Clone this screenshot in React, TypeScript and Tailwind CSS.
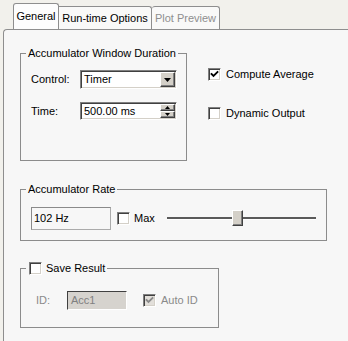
import React from 'react';

const Check = ({ color = '#000' }: { color?: string }) => (
  <svg width="9" height="9" viewBox="0 0 9 9" className="block">
    <polyline points="1.5,4 3.5,6 7.5,2" fill="none" stroke={color} strokeWidth="1.8" strokeLinecap="square" />
  </svg>
);

const CheckBox = ({ checked = false, disabled = false }: { checked?: boolean; disabled?: boolean }) => (
  <div
    className={`w-[13px] h-[13px] shrink-0 flex items-center justify-center border border-t-[#808080] border-l-[#808080] border-b-white border-r-white shadow-[inset_1px_1px_0_#404040,inset_-1px_-1px_0_#d4d0c8] ${
      disabled ? 'bg-[#e2dfda]' : 'bg-white'
    }`}
  >
    {checked && <Check color={disabled ? '#8a8a8a' : '#000'} />}
  </div>
);

const Raised = ({ className = '', children }: { className?: string; children?: React.ReactNode }) => (
  <div
    className={`bg-[#d4d0c8] border border-t-white border-l-white border-b-[#404040] border-r-[#404040] shadow-[inset_-1px_-1px_0_#808080] flex items-center justify-center ${className}`}
  >
    {children}
  </div>
);

const Tri = ({ up = false, size = 'big' }: { up?: boolean; size?: 'big' | 'small' }) => (
  <svg width={size === 'big' ? 7 : 5} height={size === 'big' ? 4 : 3} viewBox={size === 'big' ? '0 0 7 4' : '0 0 5 3'} className="block">
    {size === 'big' ? (
      <polygon points={up ? '3.5,0 7,4 0,4' : '0,0 7,0 3.5,4'} fill="#000" />
    ) : (
      <polygon points={up ? '2.5,0 5,3 0,3' : '0,0 5,0 2.5,3'} fill="#000" />
    )}
  </svg>
);

const Group = ({
  legend,
  className = '',
  children,
}: {
  legend: React.ReactNode;
  className?: string;
  children?: React.ReactNode;
}) => (
  <div className={`relative border border-[#8c8c8c] ${className}`}>
    <div className="absolute top-[-7px] left-[5px] px-[2px] bg-[#f7f7f7] h-[13px] flex items-center leading-[13px]">
      {legend}
    </div>
    {children}
  </div>
);

const Sunken = ({ className = '', children }: { className?: string; children?: React.ReactNode }) => (
  <div
    className={`border border-t-[#808080] border-l-[#808080] border-b-white border-r-white shadow-[inset_1px_1px_0_#404040,inset_-1px_-1px_0_#d4d0c8] ${className}`}
  >
    {children}
  </div>
);

export default function App() {
  return (
    <div className="w-[348px] h-[341px] overflow-hidden bg-[#f2f1ec] text-[11px] text-black leading-none font-['Liberation_Sans',Arial,sans-serif]">
      {/* tabs */}
      <div className="flex items-end h-[29px] pl-[13px]">
        <div className="w-[46px] h-[26px] bg-[#fdfdfd] border border-b-0 border-[#8e8e8e] rounded-t-[3px] flex items-center justify-center">
          General
        </div>
        <div className="w-[93px] h-[23px] bg-[#f9f9f8] border-t border-r border-[#8e8e8e] rounded-tr-[3px] flex items-center justify-center">
          Run-time Options
        </div>
        <div className="w-[68px] h-[23px] bg-[#f9f9f8] border-t border-r border-[#8e8e8e] rounded-t-[3px] flex items-center justify-center text-[#8f8f8f]">
          Plot Preview
        </div>
      </div>

      {/* panel */}
      <div className="ml-[3px] h-[312px] bg-[#f7f7f7] border-l border-t border-[#8e8e8e] rounded-tl-[4px] pl-[16px] pt-[23px]">
        <div className="flex">
          <Group legend="Accumulator Window Duration" className="w-[167px] h-[108px] pt-[16px] pl-[10px]">
            <div className="flex items-center">
              <span className="w-[49px]">Control:</span>
              <Sunken className="w-[97px] h-[19px] bg-white flex items-center justify-between pl-[3px] pr-[1px]">
                <span>Timer</span>
                <Raised className="w-[15px] h-[15px]">
                  <Tri />
                </Raised>
              </Sunken>
            </div>
            <div className="flex items-center mt-[13px]">
              <span className="w-[49px]">Time:</span>
              <Sunken className="w-[97px] h-[18px] bg-white flex items-center justify-between pl-[3px] pr-[1px]">
                <span>500.00 ms</span>
                <div className="flex flex-col">
                  <Raised className="w-[15px] h-[7px]">
                    <Tri up size="small" />
                  </Raised>
                  <Raised className="w-[15px] h-[7px]">
                    <Tri size="small" />
                  </Raised>
                </div>
              </Sunken>
            </div>
          </Group>

          <div className="ml-[21px] pt-[15px]">
            <div className="flex items-center gap-[5px]">
              <CheckBox checked />
              <span>Compute Average</span>
            </div>
            <div className="flex items-center gap-[5px] mt-[26px]">
              <CheckBox />
              <span>Dynamic Output</span>
            </div>
          </div>
        </div>

        <Group legend="Accumulator Rate" className="mt-[28px] w-[307px] h-[52px] pt-[17px] pl-[10px]">
          <div className="flex items-center">
            <div className="w-[80px] h-[23px] border border-[#ababab] border-t-[#8a8a8a] border-l-[#8a8a8a] flex items-center pl-[2px]">
              102 Hz
            </div>
            <div className="ml-[6px]">
              <CheckBox />
            </div>
            <span className="ml-[4px] w-[33px]">Max</span>
            <div className="relative w-[149px] h-[17px]">
              <div className="absolute left-0 right-0 top-[7px] h-[3px] bg-[#5a5a5a] border-b border-white" />
              <Raised className="absolute left-[65px] top-0 w-[11px] h-[16px]" />
            </div>
          </div>
        </Group>

        <Group
          legend={
            <div className="flex items-center gap-[4px] pl-[1px]">
              <CheckBox />
              <span>Save Result</span>
            </div>
          }
          className="mt-[27px] w-[199px] h-[60px] pt-[22px] pl-[15px]"
        >
          <div className="flex items-center">
            <span className="w-[31px] text-[#8a8a8a]">ID:</span>
            <div className="w-[60px] h-[19px] bg-[#d6d3ce] border border-t-[#404040] border-l-[#404040] border-b-white border-r-white flex items-center pl-[3px] text-[#808080]">
              Acc1
            </div>
            <div className="ml-[16px]">
              <CheckBox checked disabled />
            </div>
            <span className="ml-[5px] text-[#8a8a8a]">Auto ID</span>
          </div>
        </Group>
      </div>
    </div>
  );
}
